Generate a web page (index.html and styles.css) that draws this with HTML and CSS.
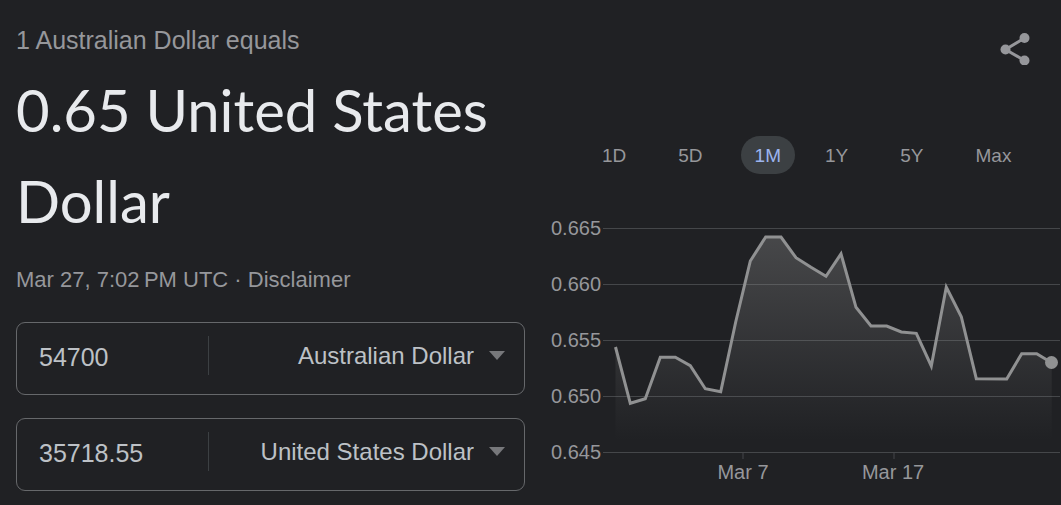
FILE: index.html
```html
<!DOCTYPE html>
<html lang="en">
<head>
<meta charset="utf-8">
<title>Currency converter</title>
<link rel="stylesheet" href="styles.css">
</head>
<body>
<main class="converter">
  <section class="summary">
    <p class="source">1 Australian Dollar equals</p>
    <h1 class="result">0.65 United States Dollar</h1>
    <p class="meta">Mar 27, 7:02&#8239;PM UTC · <a class="disclaimer" href="#">Disclaimer</a></p>
    <div class="fields">
      <div class="field">
        <input class="amount" type="text" value="54700" aria-label="Amount to convert">
        <select class="currency" aria-label="Source currency"><option>Australian Dollar</option></select>
        <svg class="arrow" viewBox="0 0 16 9" aria-hidden="true"><path d="M0 0h16L8 9z"/></svg>
      </div>
      <div class="field">
        <input class="amount" type="text" value="35718.55" aria-label="Converted amount">
        <select class="currency" aria-label="Target currency"><option>United States Dollar</option></select>
        <svg class="arrow" viewBox="0 0 16 9" aria-hidden="true"><path d="M0 0h16L8 9z"/></svg>
      </div>
    </div>
  </section>
  <section class="history">
    <button class="share" type="button" aria-label="Share">
      <svg class="share-icon" viewBox="0 0 30 32" aria-hidden="true">
        <path d="M24.500 5 5.500 16.500 24.500 27.500" fill="none" stroke="currentColor" stroke-width="3"/>
        <circle cx="24.500" cy="5" r="5"/><circle cx="5.500" cy="16.500" r="5"/><circle cx="24.500" cy="27.500" r="5"/>
      </svg>
    </button>
    <nav class="ranges" aria-label="Time range">
      <button class="range" type="button">1D</button>
      <button class="range" type="button">5D</button>
      <button class="range range-selected" type="button" aria-pressed="true">1M</button>
      <button class="range" type="button">1Y</button>
      <button class="range" type="button">5Y</button>
      <button class="range" type="button">Max</button>
    </nav>
    <svg class="chart" viewBox="0 0 510 270" role="img" aria-label="Exchange rate over one month">
      <defs>
        <linearGradient id="fade" gradientUnits="userSpaceOnUse" x1="0" y1="20" x2="0" y2="224">
          <stop offset="0" stop-color="#909090" stop-opacity="0.350"/>
          <stop offset="1" stop-color="#909090" stop-opacity="0"/>
        </linearGradient>
      </defs>
      <path class="grid" d="M52 12.500H509M52 68.500H509M52 124.500H509M52 180.500H509M52 236.500H509M192 237v6M343 237v6"/>
      <path fill="url(#fade)" d="M64.500 131 79.300 187.300 94.300 182.700 109.300 141.300H124.300L139.300 149.700 154.300 172.700 169.700 175.700 184.700 106 199.300 45 214.700 21H230L245 41.700 260 51.300 275 60.300 290 37.800 305 91.300 320 110H335.700L350.300 116 365.300 117.300 380.300 150 395.300 71 410.300 100.700 425.300 162.700 455.700 163 470.700 137.700H485.700L500.700 146.700V236H64.500z"/>
      <path class="rate" d="M64.500 131 79.300 187.300 94.300 182.700 109.300 141.300H124.300L139.300 149.700 154.300 172.700 169.700 175.700 184.700 106 199.300 45 214.700 21H230L245 41.700 260 51.300 275 60.300 290 37.800 305 91.300 320 110H335.700L350.300 116 365.300 117.300 380.300 150 395.300 71 410.300 100.700 425.300 162.700 455.700 163 470.700 137.700H485.700L500.700 146.700"/>
      <circle class="current" cx="500.500" cy="146.500" r="6.500"/>
      <g class="labels">
        <text x="0" y="19">0.665</text>
        <text x="0" y="75">0.660</text>
        <text x="0" y="131">0.655</text>
        <text x="0" y="187">0.650</text>
        <text x="0" y="243">0.645</text>
        <text x="192" y="263" text-anchor="middle">Mar 7</text>
        <text x="342" y="263" text-anchor="middle">Mar 17</text>
      </g>
    </svg>
  </section>
</main>
</body>
</html>
```
FILE: styles.css
```css
* {
  box-sizing: border-box;
}

body {
  margin: 0;
  background: #202124;
  color: #9aa0a6;
  font-family: "Liberation Sans", Arial, sans-serif;
}

.converter {
  display: grid;
  grid-template-columns: minmax(0, 1fr) minmax(0, 1fr);
  column-gap: 25px;
  padding: 24px 0 14px 16px;
}

.source,
.result,
.meta {
  margin: 0;
}

.source {
  font-size: 25px;
  line-height: 32px;
  color: #96979b;
}

.result {
  margin-top: 8px;
  font-family: Lato, "Open Sans", sans-serif;
  font-size: 58px;
  font-weight: 400;
  line-height: 91px;
  color: #e8eaed;
}

.meta {
  margin-top: 18px;
  font-size: 22px;
  line-height: 32px;
  color: #96979b;
}

.disclaimer {
  color: inherit;
  text-decoration: none;
}

.fields {
  display: grid;
  gap: 23px;
  margin-top: 26px;
}

.field {
  display: grid;
  grid-template-columns: 192px minmax(0, 1fr) 16px;
  grid-template-rows: 39px;
  align-items: center;
  height: 73px;
  margin-right: 1px;
  padding: 13px 19px 0 0;
  border: 1px solid #66686b;
  border-radius: 9px;
}

.amount,
.currency {
  width: 100%;
  border: 0;
  background: transparent;
  color: #bdc1c6;
  font-family: inherit;
}

.amount {
  height: 39px;
  padding: 3px 12px 0 22px;
  border-right: 1px solid #3c4043;
  font-size: 25px;
}

.currency {
  appearance: none;
  grid-column: 2 / 4;
  grid-row: 1;
  height: 39px;
  padding: 0 31px 0 0;
  font-size: 24px;
  text-align-last: right;
}

.arrow {
  grid-column: 3;
  grid-row: 1;
  width: 16px;
  height: 9px;
  fill: #77787b;
  pointer-events: none;
}

.history {
  display: flex;
  flex-direction: column;
}

.share {
  align-self: flex-end;
  margin: 9px 31px 0 0;
  padding: 0;
  border: 0;
  background: transparent;
  color: #96979b;
}

.share-icon {
  display: block;
  width: 30px;
  height: 32px;
  fill: currentColor;
}

.ranges {
  display: flex;
  gap: 24px;
  margin-top: 71px;
  padding-left: 37px;
}

.range {
  height: 38px;
  padding: 2px 14px 0;
  border: 0;
  border-radius: 19px;
  background: transparent;
  color: #96979b;
  font-family: inherit;
  font-size: 19px;
}

.range-selected {
  margin-right: -8px;
  background: #3c4043;
  color: #9db4ee;
}

.chart {
  display: block;
  width: 100%;
  margin-top: 42px;
}

.grid {
  fill: none;
  stroke: #45474a;
  stroke-width: 1;
}

.rate {
  fill: none;
  stroke: #909192;
  stroke-width: 3;
}

.current {
  fill: #909192;
}

.labels {
  fill: #96979b;
  font-size: 20px;
}
```
